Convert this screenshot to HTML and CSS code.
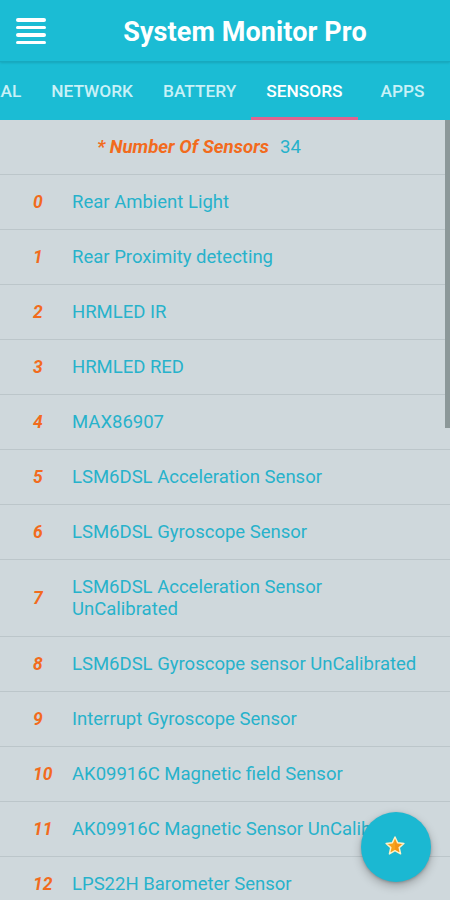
FILE: index.html
```html
<!DOCTYPE html>
<html>
<head>
<meta charset="utf-8">
<link rel="stylesheet" href="styles.css">
</head>
<body>
<div class="app">
  <header class="appbar">
    <div class="menu">
      <span></span><span></span><span></span><span></span>
    </div>
    <h1 class="title">System Monitor Pro</h1>
  </header>
  <nav class="tabs">
    <div class="strip">
      <div class="tab">GENERAL</div>
      <div class="tab">NETWORK</div>
      <div class="tab">BATTERY</div>
      <div class="tab active">SENSORS</div>
      <div class="tab">APPS</div>
    </div>
  </nav>
  <main class="list">
    <div class="summary"><span class="sum-label">* Number Of Sensors</span><span class="sum-value">34</span></div>
    <div class="row"><span class="num">0</span><span class="name">Rear Ambient Light</span></div>
    <div class="row"><span class="num">1</span><span class="name">Rear Proximity detecting</span></div>
    <div class="row"><span class="num">2</span><span class="name">HRMLED IR</span></div>
    <div class="row"><span class="num">3</span><span class="name">HRMLED RED</span></div>
    <div class="row"><span class="num">4</span><span class="name">MAX86907</span></div>
    <div class="row"><span class="num">5</span><span class="name">LSM6DSL Acceleration Sensor</span></div>
    <div class="row"><span class="num">6</span><span class="name">LSM6DSL Gyroscope Sensor</span></div>
    <div class="row"><span class="num">7</span><span class="name">LSM6DSL Acceleration Sensor<br>UnCalibrated</span></div>
    <div class="row"><span class="num">8</span><span class="name">LSM6DSL Gyroscope sensor UnCalibrated</span></div>
    <div class="row"><span class="num">9</span><span class="name">Interrupt Gyroscope Sensor</span></div>
    <div class="row"><span class="num">10</span><span class="name">AK09916C Magnetic field Sensor</span></div>
    <div class="row"><span class="num">11</span><span class="name">AK09916C Magnetic Sensor UnCalibrated</span></div>
    <div class="row"><span class="num">12</span><span class="name">LPS22H Barometer Sensor</span></div>
    <div class="scrollbar"></div>
  </main>
  <button class="fab" aria-label="favorite">
    <svg width="22" height="22" viewBox="0 0 24 24">
      <path d="M12 2.2l2.9 6.3 6.8.7-5.1 4.6 1.5 6.8L12 17.1l-6.1 3.5 1.5-6.8L2.3 9.2l6.8-.7z" fill="#f7a21b" stroke="#fff1c8" stroke-width="1.6" stroke-linejoin="round"/>
      <path d="M12 5.5l2 4.4 4.8.5-3.6 3.2 1 4.7L12 15.9z" fill="#f08a12" opacity="0.6"/>
    </svg>
  </button>
</div>
</body>
</html>
```
FILE: styles.css
```css
* { box-sizing: border-box; }
html, body { margin: 0; padding: 0; }
body {
  width: 450px;
  height: 900px;
  overflow: hidden;
  font-family: Roboto, "Noto Sans", "Liberation Sans", sans-serif;
  background: #cfd8dc;
}
.app { position: relative; width: 450px; height: 900px; overflow: hidden; }

.appbar {
  height: 62px;
  background: #1bbcd4;
  display: flex;
  align-items: center;
  border-bottom: 1px solid #17a9bf;
  box-shadow: 0 1px 2px rgba(0,0,0,0.12);
  position: relative;
  z-index: 1;
}
.menu {
  width: 30px;
  margin-left: 16px;
  display: flex;
  flex-direction: column;
  gap: 4px;
  padding-top: 1px;
}
.menu span {
  display: block;
  height: 3.5px;
  background: #fff;
  border-radius: 2px;
}
.title {
  margin: 0;
  flex: 1;
  text-align: center;
  padding: 3px 6px 0 0;
  font-size: 27px;
  font-weight: 700;
  color: #fff;
  letter-spacing: 0.1px;
}

.tabs {
  height: 58px;
  background: #1bbcd4;
  overflow: hidden;
}
.strip {
  display: flex;
  height: 100%;
  margin-left: -69px;
}
.tab {
  min-width: 90px;
  padding: 0 15px;
  display: flex;
  align-items: center;
  justify-content: center;
  font-size: 17.3px;
  font-weight: 500;
  color: #c9f1f7;
  white-space: nowrap;
  border-bottom: 3px solid transparent;
  padding-top: 3px;
}
.tab.active {
  color: #ffffff;
  border-bottom-color: #e0648f;
}

.list {
  position: relative;
  background: #cfd8dc;
}
.summary {
  height: 55px;
  border-bottom: 1px solid #bcc6ca;
  display: flex;
  align-items: center;
  padding-left: 97px;
  font-size: 18.6px;
}
.sum-label {
  color: #f26b1d;
  font-weight: 700;
  font-style: italic;
}
.sum-value {
  color: #27b2cb;
  margin-left: 11px;
}
.row {
  border-bottom: 1px solid #bcc6ca;
  display: flex;
  align-items: center;
  padding: 16px 0;
}
.num {
  width: 72px;
  padding-left: 33px;
  flex: none;
  color: #f26b1d;
  font-weight: 700;
  font-style: italic;
  font-size: 17.5px;
}
.name {
  color: #27b2cb;
  font-size: 18.5px;
  line-height: 22px;
  white-space: nowrap;
}
.scrollbar {
  position: absolute;
  right: 0;
  top: 0;
  width: 5px;
  height: 308px;
  background: #8c9899;
}

.fab {
  position: absolute;
  left: 361px;
  top: 812px;
  width: 70px;
  height: 70px;
  border-radius: 50%;
  border: none;
  background: #1bb8d2;
  box-shadow: 0 4px 10px rgba(0,0,0,0.25), 0 1px 3px rgba(0,0,0,0.2);
  display: flex;
  align-items: center;
  justify-content: center;
  padding: 0 2px 2px 0;
}
```
